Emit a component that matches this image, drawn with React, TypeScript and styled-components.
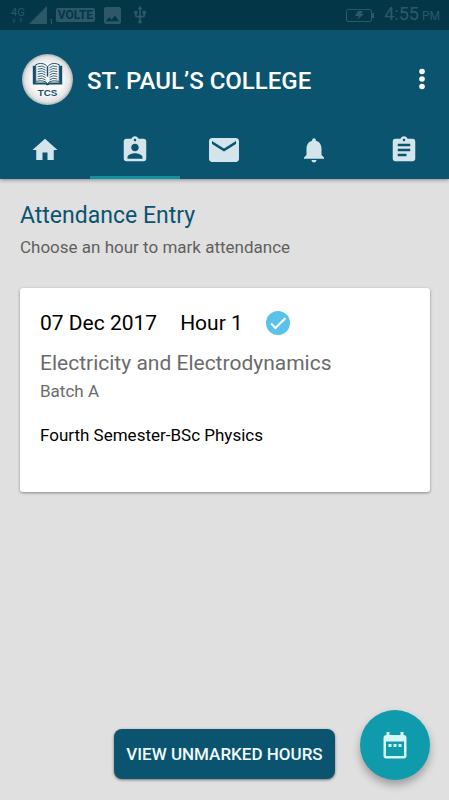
import React from "react";
import styled, { createGlobalStyle } from "styled-components";

const GlobalStyle = createGlobalStyle`
  * { box-sizing: border-box; }
  body {
    margin: 0;
    background: #e0e0e0;
    font-family: Roboto, "Liberation Sans", sans-serif;
  }
  h1, h2, h3, p { margin: 0; font-weight: 400; }
  button { font-family: inherit; border: 0; padding: 0; cursor: pointer; }
`;

const Screen = styled.div`
  min-height: 100vh;
  display: flex;
  flex-direction: column;
  background: #e0e0e0;
`;

const Header = styled.header`
  background: #0a5470;
  box-shadow: 0 1px 4px rgba(0, 0, 0, 0.4);
`;

const StatusBar = styled.div`
  display: flex;
  justify-content: space-between;
  align-items: center;
  height: 30px;
  padding: 0 9px 0 11px;
  background: #033748;
  color: #2d5868;
`;

const StatusGroup = styled.div<{ $gap: number }>`
  display: flex;
  align-items: center;
  gap: ${(p) => p.$gap}px;
`;

const Signal = styled.div`
  display: flex;
  align-items: flex-end;
  gap: 3px;
`;

const Network = styled.div`
  display: flex;
  flex-direction: column;
  align-items: center;
  font-size: 11px;
  line-height: 11px;
`;

const Volte = styled.span`
  padding: 0 2px;
  border-radius: 2px;
  background: #2d5868;
  color: #033748;
  font-size: 12px;
  line-height: 14px;
  font-weight: 700;
`;

const Clock = styled.span`
  font-size: 18px;
  line-height: 24px;
`;

const Meridiem = styled.small`
  margin-left: 3px;
  font-size: 12px;
`;

const AppBar = styled.div`
  display: flex;
  align-items: center;
  height: 90px;
  padding: 8px 7px 0 22px;
`;

const Title = styled.h1`
  flex: 1;
  margin-left: 14px;
  padding-top: 4px;
  color: #fff;
  font-size: 24px;
  line-height: 32px;
  font-weight: 500;
`;

const MenuButton = styled.button`
  display: flex;
  background: none;
  color: #fff;
`;

const Tabs = styled.nav`
  display: grid;
  grid-template-columns: repeat(5, 1fr);
`;

const Tab = styled.button<{ $active: boolean }>`
  display: flex;
  align-items: center;
  justify-content: center;
  height: 59px;
  background: none;
  color: #d3e4eb;
  box-shadow: ${(p) => (p.$active ? "inset 0 -3px #16909f" : "none")};
`;

const Main = styled.main`
  flex: 1;
  padding: 21px 19px 20px 20px;
`;

const Heading = styled.h2`
  color: #0a5470;
  font-size: 23px;
  line-height: 32px;
`;

const Hint = styled.p`
  color: #606060;
  font-size: 17px;
  line-height: 30px;
`;

const Card = styled.article`
  margin-top: 26px;
  padding: 20px 20px 44px;
  border-radius: 3px;
  background: #fff;
  box-shadow: 0 1px 3px rgba(0, 0, 0, 0.4);
`;

const CardTop = styled.div`
  display: flex;
  align-items: center;
  gap: 23px;
  color: #000;
  font-size: 21px;
  line-height: 30px;
`;

const Subject = styled.h3`
  margin-top: 10px;
  color: #6b6b6b;
  font-size: 21px;
  line-height: 30px;
`;

const Batch = styled.p`
  color: #6b6b6b;
  font-size: 17px;
  line-height: 26px;
`;

const Course = styled.p`
  margin-top: 18px;
  color: #000;
  font-size: 17px;
  line-height: 26px;
`;

const Footer = styled.footer`
  position: sticky;
  bottom: 0;
  display: grid;
  grid-template-columns: 1fr auto 1fr;
  align-items: center;
  padding: 0 19px 20px;
`;

const ViewButton = styled.button`
  grid-column: 2;
  height: 50px;
  margin-top: 18px;
  padding: 0 12px;
  border-radius: 8px;
  background: #0a5470;
  color: #f2fbff;
  font-size: 17px;
  line-height: 26px;
  font-weight: 500;
  box-shadow: 0 1px 3px rgba(0, 0, 0, 0.5);
`;

const CalendarButton = styled.button`
  justify-self: end;
  display: flex;
  align-items: center;
  justify-content: center;
  width: 70px;
  height: 70px;
  border-radius: 50%;
  background: #0f9bab;
  color: #d5f7f6;
  box-shadow: 0 5px 9px rgba(0, 0, 0, 0.3);
`;

const Svg = styled.svg`
  display: block;
  flex: none;
`;

const Icon = ({ d, size }: { d: string; size: number }) => (
  <Svg width={size} height={size} viewBox="0 0 24 24" fill="currentColor" aria-hidden="true">
    <path d={d} />
  </Svg>
);

const TABS = [
  { label: "Home", size: 30, d: "M10 20v-6h4v6h5v-8h3L12 3 2 12h3v8z" },
  {
    label: "Attendance",
    size: 30,
    d: "M19 3h-4.18C14.4 1.84 13.3 1 12 1c-1.3 0-2.4.84-2.82 2H5c-1.1 0-2 .9-2 2v14c0 1.1.9 2 2 2h14c1.1 0 2-.9 2-2V5c0-1.1-.9-2-2-2zm-7 0c.55 0 1 .45 1 1s-.45 1-1 1-1-.45-1-1 .45-1 1-1zm0 4c1.66 0 3 1.34 3 3s-1.34 3-3 3-3-1.34-3-3 1.34-3 3-3zm6 12H6v-1.4c0-2 4-3.1 6-3.1s6 1.1 6 3.1V19z",
  },
  {
    label: "Messages",
    size: 36,
    d: "M20 4H4c-1.1 0-1.99.9-1.99 2L2 18c0 1.1.9 2 2 2h16c1.1 0 2-.9 2-2V6c0-1.1-.9-2-2-2zm0 4l-8 5-8-5V6l8 5 8-5v2z",
  },
  {
    label: "Notifications",
    size: 30,
    d: "M12 22c1.1 0 2-.9 2-2h-4c0 1.1.9 2 2 2zm6-6v-5c0-3.07-1.63-5.64-4.5-6.32V4c0-.83-.67-1.5-1.5-1.5s-1.5.67-1.5 1.5v.68C7.64 5.36 6 7.92 6 11v5l-2 2v1h16v-1l-2-2z",
  },
  {
    label: "Assignments",
    size: 30,
    d: "M19 3h-4.18C14.4 1.84 13.3 1 12 1c-1.3 0-2.4.84-2.82 2H5c-1.1 0-2 .9-2 2v14c0 1.1.9 2 2 2h14c1.1 0 2-.9 2-2V5c0-1.1-.9-2-2-2zm-7 0c.55 0 1 .45 1 1s-.45 1-1 1-1-.45-1-1 .45-1 1-1zm2 14H7v-2h7v2zm3-4H7v-2h10v2zm0-4H7V7h10v2z",
  },
];

const CollegeLogo = () => (
  <Svg width="51" height="51" viewBox="0 0 52 52" role="img" aria-label="TCS logo">
    <defs>
      <radialGradient id="badge">
        <stop offset="0.6" stopColor="#fafafa" />
        <stop offset="0.88" stopColor="#e2e2e2" />
        <stop offset="1" stopColor="#a9b4b9" />
      </radialGradient>
    </defs>
    <circle cx="26" cy="26" r="26" fill="url(#badge)" />
    <path d="M11 12h3v17h10l2 1 2-1h10V12h3v19H28l-2 1-2-1H11z" fill="#164f67" />
    <path
      d="M14 11c4-2 9-2 12 2 3-4 8-4 12-2v17c-5-1-9-1-12 2-3-3-7-3-12-2z"
      fill="#f4f6f7"
      stroke="#164f67"
      strokeWidth="1"
    />
    <path
      d="M16 13q5-2 8 1M16 15.5q5-2 8 1M16 18q5-2 8 1M16 20.5q5-2 8 1M16 23q5-2 8 1M16 25.5q5-2 8 1M36 13q-5-2-8 1M36 15.5q-5-2-8 1M36 18q-5-2-8 1M36 20.5q-5-2-8 1M36 23q-5-2-8 1M36 25.5q-5-2-8 1"
      fill="none"
      stroke="#41697b"
      strokeWidth="1"
    />
    <path d="M26 13v10" stroke="#164f67" strokeWidth="1.5" />
    <text
      x="26"
      y="43"
      textAnchor="middle"
      fontFamily="Liberation Sans, sans-serif"
      fontSize="10"
      fontWeight="700"
      fill="#164f67"
    >
      TCS
    </text>
  </Svg>
);

export default function App() {
  return (
    <Screen>
      <GlobalStyle />
      <Header>
        <StatusBar>
          <StatusGroup $gap={9}>
            <StatusGroup $gap={4}>
              <Network>
                4G
                <Svg width="12" height="5" viewBox="0 0 12 5" fill="currentColor" opacity="0.5">
                  <path d="M2 0l2 3H3v2H1V3H0zM9 5L7 2h1V0h2v2h1z" />
                </Svg>
              </Network>
              <Signal>
                <Svg width="18" height="18" viewBox="0 0 18 18" fill="currentColor">
                  <path d="M18 0v18H0z" />
                </Svg>
                <Svg width="2" height="5" viewBox="0 0 2 5" fill="currentColor">
                  <path d="M0 0h2v5H1V1H0z" />
                </Svg>
              </Signal>
              <Volte>VOLTE</Volte>
            </StatusGroup>
            <Svg width="17" height="17" viewBox="3 3 18 18" fill="currentColor">
              <path d="M21 19V5c0-1.1-.9-2-2-2H5c-1.1 0-2 .9-2 2v14c0 1.1.9 2 2 2h14c1.1 0 2-.9 2-2zM8.5 13.5l2.5 3.01L14.5 12l4.5 6H5l3.5-4.5z" />
            </Svg>
            <Icon
              size={20}
              d="M15 7v4h1v2h-3V5h2l-3-4-3 4h2v8H8v-2.07c.7-.37 1.2-1.08 1.2-1.93 0-1.21-.99-2.2-2.2-2.2-1.21 0-2.2.99-2.2 2.2 0 .85.5 1.56 1.2 1.93V13c0 1.11.89 2 2 2h3v3.05c-.71.37-1.2 1.1-1.2 1.95 0 1.22.99 2.2 2.2 2.2 1.21 0 2.2-.98 2.2-2.2 0-.85-.49-1.58-1.2-1.95V15h3c1.11 0 2-.89 2-2v-2h1V7h-4z"
            />
          </StatusGroup>
          <StatusGroup $gap={10}>
            <Svg width="28" height="13" viewBox="0 0 28 13">
              <rect x="0.5" y="0.5" width="25" height="12" rx="1.5" fill="none" stroke="currentColor" />
              <path d="M26 4h2v5h-2z" fill="currentColor" />
              <path d="M12 2h5l-2 3h3l-7 6 2-4H9z" fill="currentColor" />
            </Svg>
            <Clock>
              4:55<Meridiem>PM</Meridiem>
            </Clock>
          </StatusGroup>
        </StatusBar>
        <AppBar>
          <CollegeLogo />
          <Title>ST. PAUL’S COLLEGE</Title>
          <MenuButton aria-label="More options">
            <Svg width="40" height="40" viewBox="0 0 40 40" fill="currentColor">
              <circle cx="20" cy="12.5" r="2.8" />
              <circle cx="20" cy="20" r="2.8" />
              <circle cx="20" cy="27.5" r="2.8" />
            </Svg>
          </MenuButton>
        </AppBar>
        <Tabs>
          {TABS.map((t, i) => (
            <Tab key={t.label} aria-label={t.label} $active={i === 1}>
              <Icon d={t.d} size={t.size} />
            </Tab>
          ))}
        </Tabs>
      </Header>
      <Main>
        <Heading>Attendance Entry</Heading>
        <Hint>Choose an hour to mark attendance</Hint>
        <Card>
          <CardTop>
            <span>07 Dec 2017</span>
            <span>Hour 1</span>
            <Svg width="24" height="24" viewBox="0 0 24 24" role="img" aria-label="Marked">
              <circle cx="12" cy="12" r="12" fill="#58c2e8" />
              <path d="M5 12.5l4.5 4.5L19.5 7" fill="none" stroke="#fff" strokeWidth="2.2" />
            </Svg>
          </CardTop>
          <Subject>Electricity and Electrodynamics</Subject>
          <Batch>Batch A</Batch>
          <Course>Fourth Semester-BSc Physics</Course>
        </Card>
      </Main>
      <Footer>
        <ViewButton>VIEW UNMARKED HOURS</ViewButton>
        <CalendarButton aria-label="Choose date">
          <Svg width="24" height="27" viewBox="0 0 24 27" fill="currentColor">
            <path
              fillRule="evenodd"
              d="M3.5 3V0h3v3h11V0h3v3C22.5 3 23.5 4 23.5 6v18c0 1.5-1 2.5-2.5 2.5H3C1.5 26.5.5 25.5.5 24V6c0-2 1-3 3-3zM3 9.5V24h18V9.5z"
            />
            <path d="M5.5 12h3v3h-3zM10.5 12h3v3h-3zM15.5 12h3v3h-3z" />
          </Svg>
        </CalendarButton>
      </Footer>
    </Screen>
  );
}
